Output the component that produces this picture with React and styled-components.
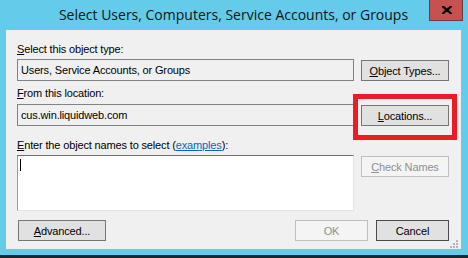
import React from 'react';
import styled, { createGlobalStyle } from 'styled-components';

const Global = createGlobalStyle`
  html, body { margin: 0; padding: 0; background: #1c252c; }
  body {
    width: 468px; height: 258px; overflow: hidden;
    font-family: "Liberation Sans", Arial, sans-serif;
  }
  * { box-sizing: border-box; }
`;

const Screen = styled.div`
  width: 468px;
  height: 258px;
  display: flex;
  flex-direction: column;
  background: #1c252c;
`;

const Frame = styled.div`
  height: 255px;
  display: flex;
  flex-direction: column;
  padding: 0 7px 6px 6px;
  background: #65cbea;
`;

const TitleBar = styled.div`
  height: 30px;
  display: grid;
  grid-template-columns: 1fr auto 1fr;
  align-items: start;
`;

const Title = styled.div`
  grid-column: 2;
  font-family: "Open Sans", "Noto Sans", sans-serif;
  font-size: 14px;
  line-height: 30px;
  color: #141414;
  white-space: nowrap;
`;

const CloseButton = styled.div`
  grid-column: 3;
  justify-self: end;
  margin-right: -2px;
  width: 34px;
  height: 21px;
  background: #c75050;
  border: 1px solid #6b3b3b;
  border-top: none;
  display: flex;
  align-items: center;
  justify-content: center;
  padding-left: 1px;
`;

const Client = styled.div`
  position: relative;
  flex: 1;
  background: #f0f0f0;
  padding: 13px 12px 0 11px;
  font-size: 11px;
  letter-spacing: -0.15px;
  color: #000;
`;

const Form = styled.div`
  display: flex;
  flex-direction: column;
`;

const Label = styled.div`
  height: 13px;
  line-height: 13px;
  margin-top: ${p => p.$mt || 0}px;
  white-space: nowrap;
`;

const Row = styled.div`
  display: grid;
  grid-template-columns: 337px 88px;
  column-gap: 7px;
  align-items: start;
  margin-top: ${p => p.$mt || 0}px;
`;

const TextBox = styled.div`
  height: 22px;
  border: 1px solid #828282;
  background: #f0f0f0;
  padding-left: 3px;
  display: flex;
  align-items: center;
  white-space: nowrap;
`;

const NamesBox = styled.div`
  height: 56px;
  background: #fff;
  border-style: solid;
  border-width: 1px;
  border-color: #6e6e6e #e3e3e3 #e3e3e3 #9a9a9a;
  padding: 3px 0 0 2px;
`;

const Caret = styled.span`
  display: block;
  width: 1px;
  height: 12px;
  background: #000;
`;

const Button = styled.div`
  width: ${p => p.$w || 88}px;
  height: 21px;
  margin-top: ${p => p.$mt || 0}px;
  display: flex;
  align-items: center;
  justify-content: center;
  white-space: nowrap;
  border: 1px solid ${p => (p.$disabled ? '#bfbfbf' : p.$default ? '#4a4a4a' : '#767676')};
  background: ${p => (p.$disabled ? '#f4f4f4' : '#e1e1e1')};
  color: ${p => (p.$disabled ? '#8f8f8f' : '#000')};
`;

const Highlight = styled.div`
  position: relative;
  margin-top: 1px;
`;

const RedBox = styled.div`
  position: absolute;
  top: -11px;
  left: -8px;
  right: -8px;
  bottom: -14px;
  border: 5px solid #ed1c24;
  pointer-events: none;
`;

const Link = styled.span`
  color: #0066cc;
  text-decoration: underline;
`;

const Footer = styled.div`
  display: flex;
  align-items: center;
  gap: 8px;
  margin-top: 9px;
  padding-left: 1px;
`;

const Spacer = styled.div`
  flex: 1;
`;

const Grip = styled.svg`
  position: absolute;
  right: 3px;
  bottom: 1px;
`;

export default function App() {
  return (
    <Screen>
      <Global />
      <Frame>
        <TitleBar>
          <Title>Select Users, Computers, Service Accounts, or Groups</Title>
          <CloseButton>
            <svg width="10" height="8" viewBox="0 0 10 8">
              <path d="M1 0.5 L9 7.5 M9 0.5 L1 7.5" stroke="#000" strokeWidth="2.3" strokeLinecap="square" />
            </svg>
          </CloseButton>
        </TitleBar>
        <Client>
          <Form>
            <Label><u>S</u>elect this object type:</Label>
            <Row $mt={3}>
              <TextBox>Users, Service Accounts, or Groups</TextBox>
              <Button $mt={1}><u>O</u>bject Types...</Button>
            </Row>
            <Label $mt={6}><u>F</u>rom this location:</Label>
            <Row $mt={4}>
              <TextBox>cus.win.liquidweb.com</TextBox>
              <Highlight>
                <Button><u>L</u>ocations...</Button>
                <RedBox />
              </Highlight>
            </Row>
            <Label $mt={13}><u>E</u>nter the object names to select (<Link>examples</Link>):</Label>
            <Row $mt={3}>
              <NamesBox><Caret /></NamesBox>
              <Button $mt={1} $disabled><u>C</u>heck Names</Button>
            </Row>
            <Footer>
              <Button><u>A</u>dvanced...</Button>
              <Spacer />
              <Button $w={73} $disabled>OK</Button>
              <Button $w={73} $default>Cancel</Button>
            </Footer>
          </Form>
          <Grip width="8" height="8" viewBox="0 0 8 8">
            <rect x="6" y="0" width="2" height="2" fill="#b4b4b4" />
            <rect x="3" y="3" width="2" height="2" fill="#b4b4b4" />
            <rect x="6" y="3" width="2" height="2" fill="#b4b4b4" />
            <rect x="0" y="6" width="2" height="2" fill="#b4b4b4" />
            <rect x="3" y="6" width="2" height="2" fill="#b4b4b4" />
            <rect x="6" y="6" width="2" height="2" fill="#b4b4b4" />
          </Grip>
        </Client>
      </Frame>
    </Screen>
  );
}
